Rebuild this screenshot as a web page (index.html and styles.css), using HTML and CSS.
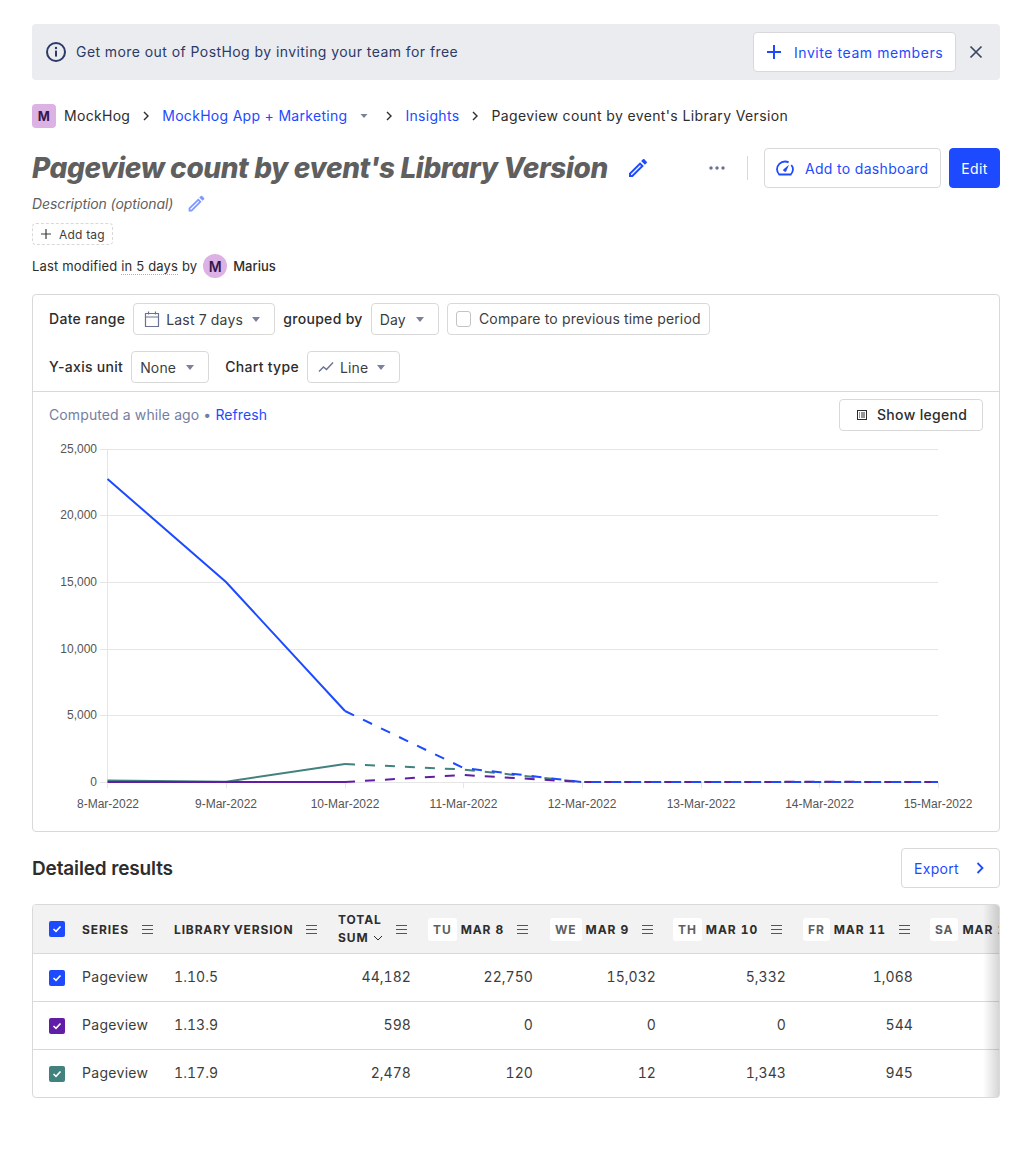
FILE: index.html
```html
<!DOCTYPE html>
<html lang="en">
<head>
<meta charset="utf-8">
<title>Pageview count by event's Library Version</title>
<link rel="stylesheet" href="styles.css">
</head>
<body>
<main class="page">
  <section class="banner">
    <svg class="banner-info" viewBox="0 0 20 20"><circle cx="10" cy="10" r="9" fill="none" stroke="currentColor" stroke-width="2"/><circle cx="10" cy="6" r="1.2" fill="currentColor"/><rect x="9" y="8.6" width="2" height="6" fill="currentColor"/></svg>
    <span class="banner-text">Get more out of PostHog by inviting your team for free</span>
    <button class="btn btn-invite"><svg class="icon-plus" viewBox="0 0 16 16"><path d="M8 1v14M1 8h14" stroke="currentColor" stroke-width="2" fill="none"/></svg>Invite team members</button>
    <svg class="banner-close" viewBox="0 0 14 14"><path d="M1.5 1.5l11 11M12.5 1.5l-11 11" stroke="currentColor" stroke-width="1.7" fill="none"/></svg>
  </section>

  <nav class="crumbs">
    <span class="org-badge">M</span>
    <span class="crumb-text crumb-org">MockHog</span>
    <svg class="chev" viewBox="0 0 8 12"><path d="M2 2l4 4-4 4" fill="none" stroke="currentColor" stroke-width="1.4"/></svg>
    <a class="crumb-text crumb-link">MockHog App + Marketing</a>
    <svg class="caret-crumb" viewBox="0 0 10 6"><path d="M1.5 1h7L5 5z" fill="currentColor"/></svg>
    <svg class="chev" viewBox="0 0 8 12"><path d="M2 2l4 4-4 4" fill="none" stroke="currentColor" stroke-width="1.4"/></svg>
    <a class="crumb-text crumb-link">Insights</a>
    <svg class="chev" viewBox="0 0 8 12"><path d="M2 2l4 4-4 4" fill="none" stroke="currentColor" stroke-width="1.4"/></svg>
    <span class="crumb-text crumb-current">Pageview count by event's Library Version</span>
  </nav>

  <header class="title-row">
    <h1 class="title">Pageview count by event's Library Version</h1>
    <svg class="edit-title" viewBox="0 0 24 24"><path fill="currentColor" d="M3 17.25V21h3.75L17.81 9.94l-3.75-3.75L3 17.25zM5.92 19H5v-.92l9.06-9.06.92.92L5.92 19zM20.71 7.04c.39-.39.39-1.02 0-1.41l-2.34-2.34c-.2-.2-.45-.29-.71-.29s-.51.1-.7.29l-1.83 1.83 3.75 3.75 1.83-1.83z"/></svg>
    <span class="spacer"></span>
    <svg class="more" viewBox="0 0 16 4"><circle cx="2" cy="2" r="1.7"/><circle cx="8" cy="2" r="1.7"/><circle cx="14" cy="2" r="1.7"/></svg>
    <span class="vr"></span>
    <button class="btn btn-dash"><svg class="icon-gauge" viewBox="0 0 18 16"><path d="M4 14.5H3.2C1.8 12.9 1 11.3 1 9.3 1 5 4.6 1.5 9 1.5c1.3 0 2.5.3 3.6.9M15.3 5c1.1 1.3 1.7 2.6 1.7 4.3 0 2-.8 3.6-2.2 5.2H4" fill="none" stroke="currentColor" stroke-width="1.8"/><path d="M7.3 9.6l5.7-4.9-2.9 6.7c-.5 1-3.7.1-2.8-1.8z" fill="currentColor"/></svg>Add to dashboard</button>
    <button class="btn btn-primary">Edit</button>
  </header>

  <div class="desc-row">
    <span class="desc">Description (optional)</span>
    <svg class="edit-desc" viewBox="0 0 24 24"><path fill="currentColor" d="M3 17.25V21h3.75L17.81 9.94l-3.75-3.75L3 17.25zM5.92 19H5v-.92l9.06-9.06.92.92L5.92 19zM20.71 7.04c.39-.39.39-1.02 0-1.41l-2.34-2.34c-.2-.2-.45-.29-.71-.29s-.51.1-.7.29l-1.83 1.83 3.75 3.75 1.83-1.83z"/></svg>
  </div>

  <div class="tag-row"><span class="add-tag"><svg class="tag-plus" viewBox="0 0 12 12"><path d="M6 1v10M1 6h10" stroke="currentColor" stroke-width="1.2" fill="none"/></svg>Add tag</span></div>

  <div class="modified">
    <span>Last modified <span class="dotted">in 5 days</span> by</span>
    <span class="avatar">M</span>
    <span class="author">Marius</span>
  </div>

  <section class="card">
    <div class="filters">
      <div class="filter-row">
        <span class="filter-label">Date range</span>
        <span class="select sel-range"><svg class="icon-cal" viewBox="0 0 16 16"><path d="M1.5 2.5h13v13h-13zM1.5 6h13M4.5 .5v3M11.5 .5v3" fill="none" stroke="currentColor" stroke-width="1.2"/></svg>Last 7 days<svg class="caret" viewBox="0 0 8 5"><path d="M0 0h8L4 5z" fill="currentColor"/></svg></span>
        <span class="filter-label">grouped by</span>
        <span class="select sel-day">Day<svg class="caret" viewBox="0 0 8 5"><path d="M0 0h8L4 5z" fill="currentColor"/></svg></span>
        <span class="select sel-compare"><span class="box"></span><span class="compare-text">Compare to previous time period</span></span>
      </div>
      <div class="filter-row filter-row-b">
        <span class="filter-label">Y-axis unit</span>
        <span class="select sel-unit">None<svg class="caret" viewBox="0 0 8 5"><path d="M0 0h8L4 5z" fill="currentColor"/></svg></span>
        <span class="filter-label label-chart">Chart type</span>
        <span class="select sel-chart"><svg class="icon-line" viewBox="0 0 16 12"><path d="M1 10.5l4.5-4.5 3 2.5L15 1.5" fill="none" stroke="currentColor" stroke-width="1.4"/></svg>Line<svg class="caret" viewBox="0 0 8 5"><path d="M0 0h8L4 5z" fill="currentColor"/></svg></span>
      </div>
    </div>
    <div class="chart-panel">
      <div class="computed-row">
        <span class="computed">Computed a while ago • <a class="refresh">Refresh</a></span>
        <button class="btn btn-legend"><svg class="icon-legend" viewBox="0 0 10 10"><rect x=".5" y=".5" width="9" height="9" fill="none" stroke="currentColor"/><path d="M2 3h1M4 3h4M2 5h1M4 5h4M2 7h1M4 7h4" stroke="currentColor"/></svg><span class="legend-text">Show legend</span></button>
      </div>
      <svg class="chart" viewBox="33 432 966 399" width="966" height="399">
        <g class="grid">
          <path d="M100 449.5H938M100 515.5H938M100 582.5H938M100 649.5H938M100 715.5H938M100 782.5H938"/>
          <path d="M107.5 449V788M226.5 782V788M345.5 782V788M463.5 782V788M582.5 782V788M701.5 782V788M819.5 782V788M938.5 782V788"/>
        </g>
        <g class="ylabels">
          <text x="97" y="453">25,000</text>
          <text x="97" y="519">20,000</text>
          <text x="97" y="586">15,000</text>
          <text x="97" y="653">10,000</text>
          <text x="97" y="719">5,000</text>
          <text x="97" y="786">0</text>
        </g>
        <g class="xlabels">
          <text x="108" y="808">8-Mar-2022</text>
          <text x="226" y="808">9-Mar-2022</text>
          <text x="345" y="808">10-Mar-2022</text>
          <text x="463.5" y="808">11-Mar-2022</text>
          <text x="582" y="808">12-Mar-2022</text>
          <text x="701" y="808">13-Mar-2022</text>
          <text x="819.5" y="808">14-Mar-2022</text>
          <text x="938" y="808">15-Mar-2022</text>
        </g>
        <polyline class="ln ln-green" points="107.5,780.5 226,781.8 345,764"/>
        <polyline class="ln ln-green dash" points="345,764 463.5,769.5 582,782 701,782 819.5,782 938,782"/>
        <polyline class="ln ln-purple" points="107.5,782 226,782 345,782"/>
        <polyline class="ln ln-purple dash" points="345,782 463.5,775 582,782 701,782 819.5,781.8 938,782"/>
        <polyline class="ln ln-blue" points="107.5,479 226,582 345,711"/>
        <polyline class="ln ln-blue dash" points="345,711 463.5,768 582,782 701,782 819.5,782 938,782"/>
      </svg>
    </div>
  </section>

  <div class="results-head">
    <h2 class="results-title">Detailed results</h2>
    <button class="btn btn-export">Export<svg class="icon-export" viewBox="0 0 8 12"><path d="M1.5 1l5 5-5 5" fill="none" stroke="currentColor" stroke-width="1.8"/></svg></button>
  </div>

  <section class="table-wrap">
    <table class="results">
      <colgroup>
        <col class="c-check"><col class="c-series"><col class="c-lib"><col class="c-total"><col class="c-d1"><col class="c-d2"><col class="c-d3"><col class="c-d4"><col class="c-d5">
      </colgroup>
      <thead>
        <tr>
          <th><span class="cb cb-blue"><svg viewBox="0 0 10 8"><path d="M1.5 4l2.5 2.3L8.5 1.5" fill="none" stroke="#fff" stroke-width="1.6"/></svg></span></th>
          <th><div class="th-in"><span>SERIES</span><svg class="menu" viewBox="0 0 11 9"><path d="M0 .5h11M0 4.5h11M0 8.5h11" stroke="currentColor"/></svg></div></th>
          <th><div class="th-in"><span class="lib-head">LIBRARY VERSION</span><svg class="menu" viewBox="0 0 11 9"><path d="M0 .5h11M0 4.5h11M0 8.5h11" stroke="currentColor"/></svg></div></th>
          <th><div class="th-in"><span class="total">TOTAL<br>SUM <svg class="sort" viewBox="0 0 10 6"><path d="M1 1l4 4 4-4" fill="none" stroke="currentColor"/></svg></span><svg class="menu" viewBox="0 0 11 9"><path d="M0 .5h11M0 4.5h11M0 8.5h11" stroke="currentColor"/></svg></div></th>
          <th class="th-date"><div class="th-in"><span class="day">TU</span><span>MAR 8</span><svg class="menu" viewBox="0 0 11 9"><path d="M0 .5h11M0 4.5h11M0 8.5h11" stroke="currentColor"/></svg></div></th>
          <th class="th-date"><div class="th-in"><span class="day">WE</span><span>MAR 9</span><svg class="menu" viewBox="0 0 11 9"><path d="M0 .5h11M0 4.5h11M0 8.5h11" stroke="currentColor"/></svg></div></th>
          <th class="th-date"><div class="th-in"><span class="day">TH</span><span>MAR 10</span><svg class="menu" viewBox="0 0 11 9"><path d="M0 .5h11M0 4.5h11M0 8.5h11" stroke="currentColor"/></svg></div></th>
          <th class="th-date"><div class="th-in"><span class="day">FR</span><span>MAR 11</span><svg class="menu" viewBox="0 0 11 9"><path d="M0 .5h11M0 4.5h11M0 8.5h11" stroke="currentColor"/></svg></div></th>
          <th class="th-date"><div class="th-in"><span class="day">SA</span><span>MAR 12</span></div></th>
        </tr>
      </thead>
      <tbody>
        <tr>
          <td><span class="cb cb-blue"><svg viewBox="0 0 10 8"><path d="M1.5 4l2.5 2.3L8.5 1.5" fill="none" stroke="#fff" stroke-width="1.6"/></svg></span></td>
          <td class="name">Pageview</td><td>1.10.5</td><td class="num">44,182</td><td class="num">22,750</td><td class="num">15,032</td><td class="num">5,332</td><td class="num">1,068</td><td></td>
        </tr>
        <tr>
          <td><span class="cb cb-purple"><svg viewBox="0 0 10 8"><path d="M1.5 4l2.5 2.3L8.5 1.5" fill="none" stroke="#fff" stroke-width="1.6"/></svg></span></td>
          <td class="name">Pageview</td><td>1.13.9</td><td class="num">598</td><td class="num">0</td><td class="num">0</td><td class="num">0</td><td class="num">544</td><td></td>
        </tr>
        <tr>
          <td><span class="cb cb-green"><svg viewBox="0 0 10 8"><path d="M1.5 4l2.5 2.3L8.5 1.5" fill="none" stroke="#fff" stroke-width="1.6"/></svg></span></td>
          <td class="name">Pageview</td><td>1.17.9</td><td class="num">2,478</td><td class="num">120</td><td class="num">12</td><td class="num">1,343</td><td class="num">945</td><td></td>
        </tr>
      </tbody>
    </table>
    <span class="scroll-shadow"></span>
  </section>
</main>
</body>
</html>
```

FILE: styles.css
```css
* { box-sizing: border-box; }
html, body { margin: 0; background: #fff; }
body { font-family: Inter, "Liberation Sans", sans-serif; font-size: 14px; color: #2d2d2d; }
svg { display: block; flex: none; }
h1, h2 { margin: 0; }
button { font: inherit; background: #fff; cursor: pointer; }

.page { padding: 24px 32px 64px; width: 1032px; height: 1162px; overflow: hidden; }

.btn { display: inline-flex; align-items: center; border: 1px solid #d9d9d9; border-radius: 4px; color: #1d4aff; letter-spacing: .32px; white-space: nowrap; }

.banner { display: flex; align-items: center; height: 56px; padding: 0 17px 0 14px; background: #ebecf0; border-radius: 4px; color: #2d3a66; }
.banner-info { width: 20px; height: 20px; margin-right: 10px; }
.banner-text { flex: 1; letter-spacing: .43px; padding-bottom: 2px; }
.btn-invite { height: 40px; width: 203px; padding: 0 12px; letter-spacing: .56px; }
.icon-plus { width: 16px; height: 16px; margin-right: 12px; }
.banner-close { width: 14px; height: 14px; margin-left: 13px; color: #3c4560; }

.crumbs { display: flex; align-items: center; height: 24px; margin-top: 24px; letter-spacing: .3px; }
.crumb-text { padding-bottom: 2px; }
.org-badge { display: flex; align-items: center; justify-content: center; width: 24px; height: 24px; border-radius: 4px; background: #dcb1e3; color: #35174d; font-weight: 700; font-size: 13px; }
.crumb-org { margin-left: 8px; }
.chev { width: 8px; height: 12px; margin: 0 12px; color: #2d2d2d; }
.crumb-link { color: #1d4aff; }
.caret-crumb { width: 10px; height: 6px; margin-left: 12px; margin-right: 4px; color: #7b809b; }
.crumb-current { color: #2d2d2d; letter-spacing: .37px; }

.title-row { display: flex; align-items: center; height: 40px; margin-top: 20px; }
.title { font-size: 28px; font-style: italic; font-weight: 800; line-height: 40px; letter-spacing: -.4px; color: #5f5f5f; white-space: nowrap; }
.edit-title { width: 24px; height: 24px; margin-left: 18px; color: #1d4aff; }
.spacer { flex: 1; }
.more { width: 16px; height: 4px; fill: #6a7193; margin-right: 22px; }
.vr { width: 1px; height: 24px; background: #d9d9d9; margin-right: 16px; }
.btn-dash { height: 40px; width: 177px; padding: 0 11px; margin-right: 8px; }
.icon-gauge { width: 18px; height: 16px; margin-right: 11px; }
.btn-primary { height: 40px; width: 51px; justify-content: center; background: #1d4aff; border-color: #1d4aff; color: #fff; letter-spacing: .4px; }

.desc-row { display: flex; align-items: center; height: 24px; margin-top: 3px; }
.desc { font-style: italic; color: #5f5f5f; letter-spacing: -.09px; }
.edit-desc { width: 21px; height: 21px; margin-left: 13px; color: #7f9aff; }

.tag-row { display: flex; margin-top: 8px; }
.add-tag { display: inline-flex; align-items: center; height: 22px; width: 81px; padding-left: 7px; border: 1px dashed #d9d9d9; border-radius: 4px; font-size: 12px; letter-spacing: .2px; color: #3d3d3d; }
.tag-plus { width: 12px; height: 12px; margin-right: 7px; }

.modified { display: flex; align-items: center; height: 24px; margin-top: 9px; font-size: 13px; letter-spacing: .17px; }
.dotted { border-bottom: 1px dotted #b0b0b0; }
.avatar { display: flex; align-items: center; justify-content: center; width: 24px; height: 24px; margin-left: 6px; border-radius: 50%; background: #dcb1e3; color: #35174d; font-weight: 600; font-size: 14px; }
.author { margin-left: 6px; font-weight: 500; letter-spacing: 0; }

.card { height: 538px; margin-top: 16px; border: 1px solid #d9d9d9; border-radius: 4px; }
.filters { height: 97px; padding: 8px 16px 0; border-bottom: 1px solid #d9d9d9; }
.filter-row { display: flex; align-items: center; height: 32px; gap: 8px; letter-spacing: .15px; }
.filter-row-b { margin-top: 16px; }
.filter-label { font-weight: 500; letter-spacing: .3px; white-space: nowrap; padding-bottom: 2px; }
.label-chart { margin-left: 8px; }
.select { display: inline-flex; align-items: center; height: 32px; padding: 0 8px; border: 1px solid #d9d9d9; border-radius: 4px; white-space: nowrap; color: #3d3d3d; }
.sel-range { width: 142px; padding-left: 10px; }
.sel-day { width: 68px; }
.sel-compare { width: 263px; }
.sel-unit { width: 78px; }
.sel-chart { width: 93px; padding-left: 10px; }
.caret { width: 8px; height: 5px; margin-left: auto; margin-right: 6px; color: #7b809b; }
.icon-cal { width: 16px; height: 16px; margin-right: 6px; color: #6a7193; }
.icon-line { width: 16px; height: 12px; margin-right: 6px; color: #6a7193; }
.box { width: 16px; height: 16px; margin-right: 8px; border: 1px solid #c4c4c4; border-radius: 3px; }
.compare-text { padding-bottom: 2px; }

.chart-panel { display: flex; flex-direction: column; }
.computed-row { display: flex; align-items: center; justify-content: space-between; height: 32px; margin-top: 7px; padding: 0 16px; }
.computed { color: #747ea2; letter-spacing: .11px; padding-bottom: 2px; }
.refresh { color: #1d4aff; }
.btn-legend { height: 32px; width: 144px; padding: 0 16px 0 17px; color: #2d2d2d; font-weight: 500; }
.legend-text { padding-bottom: 2px; }
.icon-legend { width: 10px; height: 10px; margin-right: 10px; }
.chart { margin-top: 1px; }
.grid path { stroke: #e5e5e5; stroke-width: 1; fill: none; }
.ylabels text, .xlabels text { font-family: "Liberation Sans", Arial, sans-serif; font-size: 12px; fill: #555; }
.ylabels text { text-anchor: end; }
.xlabels text { text-anchor: middle; }
.ln { fill: none; stroke-width: 2; }
.ln-blue { stroke: #1d4aff; }
.ln-purple { stroke: #621da6; }
.ln-green { stroke: #42827e; }
.dash { stroke-dasharray: 10 10; }

.results-head { display: flex; align-items: center; justify-content: space-between; height: 40px; margin-top: 16px; }
.results-title { font-size: 19px; font-weight: 600; letter-spacing: -.14px; }
.btn-export { height: 40px; width: 99px; padding: 0 12px; }
.icon-export { width: 8px; height: 12px; margin-left: auto; margin-right: 3px; }

.table-wrap { position: relative; height: 194px; margin-top: 16px; border: 1px solid #d9d9d9; border-radius: 4px; overflow: hidden; }
.results { table-layout: fixed; width: 1020px; border-collapse: separate; border-spacing: 0; font-feature-settings: "tnum"; }
.c-check { width: 33px; } .c-series { width: 92px; } .c-lib { width: 164px; } .c-total { width: 105px; }
.c-d1 { width: 122px; } .c-d2 { width: 123px; } .c-d3 { width: 130px; } .c-d4 { width: 127px; } .c-d5 { width: 124px; }
.results th { height: 49px; padding: 0 0 0 16px; background: #f2f2f2; border-bottom: 1px solid #d9d9d9; text-align: left; font-size: 12px; font-weight: 700; letter-spacing: .92px; white-space: nowrap; }
.results td { height: 48px; padding: 0 16px 2px; border-bottom: 1px solid #d9d9d9; letter-spacing: .05px; color: #3d3d3d; white-space: nowrap; }
.results td:first-child { padding-bottom: 0; }
.results td.name { letter-spacing: .3px; }
.results tbody tr:last-child td { border-bottom: 0; height: 47px; }
.results th.th-date { padding-left: 1px; }
.results td.num { text-align: right; }
.lib-head { letter-spacing: .85px; word-spacing: -1.5px; }
.th-in { display: flex; align-items: center; }
.menu { width: 11px; height: 9px; margin-left: 13px; color: #555; }
.total { line-height: 18px; }
.sort { display: inline-block; width: 10px; height: 6px; vertical-align: 1px; }
.day { display: inline-flex; align-items: center; justify-content: center; height: 23px; padding: 0 5px; margin-right: 4px; background: #fff; border-radius: 3px; color: #5f5f5f; }
.cb { display: flex; align-items: center; justify-content: center; width: 16px; height: 16px; border-radius: 2px; }
.cb svg { width: 10px; height: 8px; }
.cb-blue { background: #1d4aff; }
.cb-purple { background: #621da6; }
.cb-green { background: #42827e; }
.scroll-shadow { position: absolute; top: 0; right: 0; bottom: 0; width: 16px; background: linear-gradient(to left, rgba(0,0,0,.16), rgba(0,0,0,0)); }
```
